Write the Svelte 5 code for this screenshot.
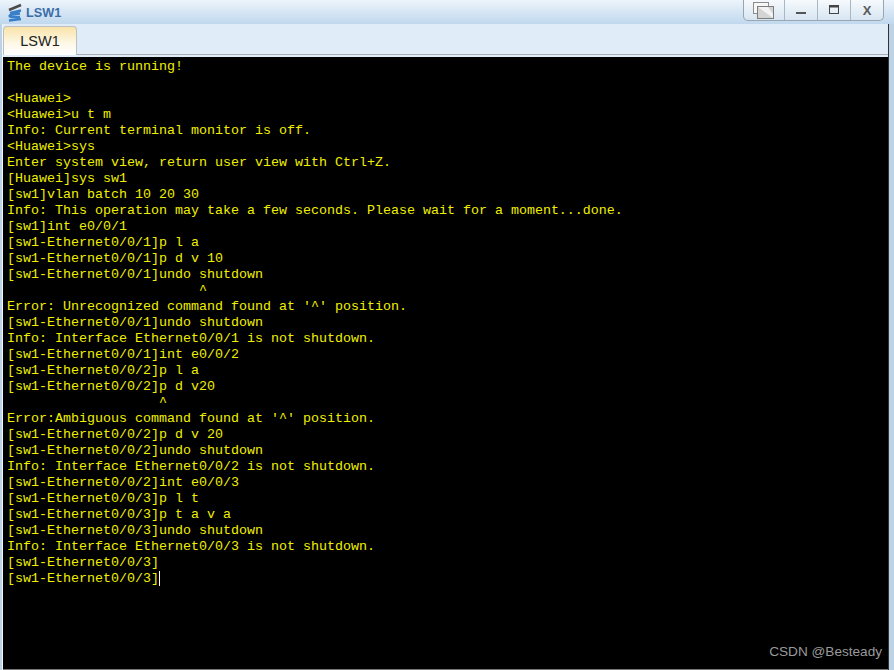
<script lang="ts">
	const lines = [
		'The device is running!',
		'',
		'<Huawei>',
		'<Huawei>u t m',
		'Info: Current terminal monitor is off.',
		'<Huawei>sys',
		'Enter system view, return user view with Ctrl+Z.',
		'[Huawei]sys sw1',
		'[sw1]vlan batch 10 20 30',
		'Info: This operation may take a few seconds. Please wait for a moment...done.',
		'[sw1]int e0/0/1',
		'[sw1-Ethernet0/0/1]p l a',
		'[sw1-Ethernet0/0/1]p d v 10',
		'[sw1-Ethernet0/0/1]undo shutdown',
		'                        ^',
		"Error: Unrecognized command found at '^' position.",
		'[sw1-Ethernet0/0/1]undo shutdown',
		'Info: Interface Ethernet0/0/1 is not shutdown.',
		'[sw1-Ethernet0/0/1]int e0/0/2',
		'[sw1-Ethernet0/0/2]p l a',
		'[sw1-Ethernet0/0/2]p d v20',
		'                   ^',
		"Error:Ambiguous command found at '^' position.",
		'[sw1-Ethernet0/0/2]p d v 20',
		'[sw1-Ethernet0/0/2]undo shutdown',
		'Info: Interface Ethernet0/0/2 is not shutdown.',
		'[sw1-Ethernet0/0/2]int e0/0/3',
		'[sw1-Ethernet0/0/3]p l t',
		'[sw1-Ethernet0/0/3]p t a v a',
		'[sw1-Ethernet0/0/3]undo shutdown',
		'Info: Interface Ethernet0/0/3 is not shutdown.',
		'[sw1-Ethernet0/0/3]',
		'[sw1-Ethernet0/0/3]',
	];
</script>

<div class="window">
	<header class="titlebar">
		<svg class="logo" width="16" height="19" viewBox="0 0 16 19">
			<path d="M2 7 L14 2" stroke="#4a4a4a" stroke-width="2.500" fill="none" />
			<path d="M3 10 L14 7.500 M13 10.500 L4 11.500 Q1 13 4 14 L13 14 M2 17.500 L14 16" stroke="#3a7fca" stroke-width="2.400" fill="none" />
		</svg>
		<span class="title">LSW1</span>
		<div class="controls">
			<button class="ctrl restore" aria-label="restore">
				<svg width="22" height="17" viewBox="0 0 22 17">
					<rect x="0.500" y="0.500" width="15" height="11" fill="#f7f7f7" stroke="#8c8c8c" />
					<rect x="4.500" y="4.500" width="16" height="12" fill="#d4d4d4" stroke="#7d7d7d" />
					<path d="M5 5 H15 L20 12 V16 Z" fill="#f3f3f3" />
				</svg>
			</button>
			<button class="ctrl" aria-label="minimize">
				<svg width="12" height="12" viewBox="0 0 12 12"><rect x="1" y="8" width="10" height="2" fill="#555" /></svg>
			</button>
			<button class="ctrl" aria-label="maximize">
				<svg width="12" height="12" viewBox="0 0 12 12"><rect x="1.500" y="1.500" width="9" height="8" fill="none" stroke="#444" /><rect x="1" y="1" width="10" height="2.500" fill="#444" /></svg>
			</button>
			<button class="ctrl close">X</button>
		</div>
	</header>

	<div class="panel">
		<nav class="tabs">
			<div class="tab">LSW1</div>
		</nav>

		<main class="terminal">
			{#each lines as line, i}
				<div class="line">{line}{#if i === lines.length - 1}<span class="cursor"></span>{/if}</div>
			{/each}
			<div class="mark">CSDN @Besteady</div>
		</main>
	</div>
</div>

<style>
	:global(body) {
		margin: 0;
		background: #fff;
	}

	.window {
		width: 894px;
		height: 670px;
		display: flex;
		flex-direction: column;
		box-sizing: border-box;
		padding: 0 5px 0 2px;
		background: #bcd3e6;
		font-family: 'Liberation Sans', Arial, sans-serif;
	}

	.titlebar {
		height: 24px;
		flex: none;
		display: flex;
		align-items: flex-start;
		margin: 0 -5px 0 -2px;
		padding: 0 10px 0 7px;
		background: linear-gradient(#edf4fb, #c0d8ee);
	}

	.logo {
		margin-top: 3px;
	}

	.title {
		margin: 5px 0 0 3px;
		font-size: 12.700px;
		font-weight: bold;
		color: #3b6ea8;
		line-height: 17px;
	}

	.controls {
		margin-left: auto;
		display: flex;
		height: 21px;
		box-sizing: border-box;
		border: 1px solid #98a5b2;
		border-top: none;
		border-radius: 0 0 5px 5px;
		background: linear-gradient(#f6fafd, #d7e5f1);
	}

	.ctrl {
		width: 33px;
		padding: 0;
		border: none;
		border-left: 1px solid #aab6c2;
		background: none;
		display: flex;
		align-items: center;
		justify-content: center;
		font-family: inherit;
		font-size: 13px;
		font-weight: bold;
		color: #5a5a5a;
	}

	.ctrl.restore {
		width: 40px;
		border-left: none;
	}

	.panel {
		flex: 1;
		min-height: 0;
		display: flex;
		flex-direction: column;
		border-left: 1px solid #f2f7fb;
		border-right: 1px solid #333;
		background: #e0ecf8;
	}

	.tabs {
		height: 31px;
		flex: none;
		display: flex;
		align-items: flex-end;
		box-sizing: border-box;
		border-bottom: 1px solid #a9adb2;
	}

	.tab {
		width: 74px;
		height: 29px;
		box-sizing: border-box;
		margin-bottom: -1px;
		border: 1px solid #bcc0c4;
		border-bottom: none;
		border-radius: 4px 4px 0 0;
		background: linear-gradient(#f9e3a8, #fdf8e8 60%, #ffffff);
		color: #222;
		font-size: 14.500px;
		text-align: center;
		line-height: 28px;
	}

	.terminal {
		flex: 1;
		min-height: 0;
		margin-top: 2px;
		background: #000;
		border-bottom: 1px solid #777;
		padding: 2px 0 0 4px;
		font-family: 'Liberation Mono', 'Courier New', monospace;
		font-size: 13.333px;
		line-height: 16px;
		color: #f0f000;
		position: relative;
		overflow: hidden;
	}

	.line {
		height: 16px;
		white-space: pre;
	}

	.cursor {
		position: absolute;
		width: 1px;
		height: 15px;
		background: #fff;
	}

	.mark {
		position: absolute;
		right: 6px;
		bottom: 9px;
		font-family: 'Liberation Sans', Arial, sans-serif;
		font-size: 13.600px;
		line-height: 16px;
		color: #9a9a9a;
	}
</style>
